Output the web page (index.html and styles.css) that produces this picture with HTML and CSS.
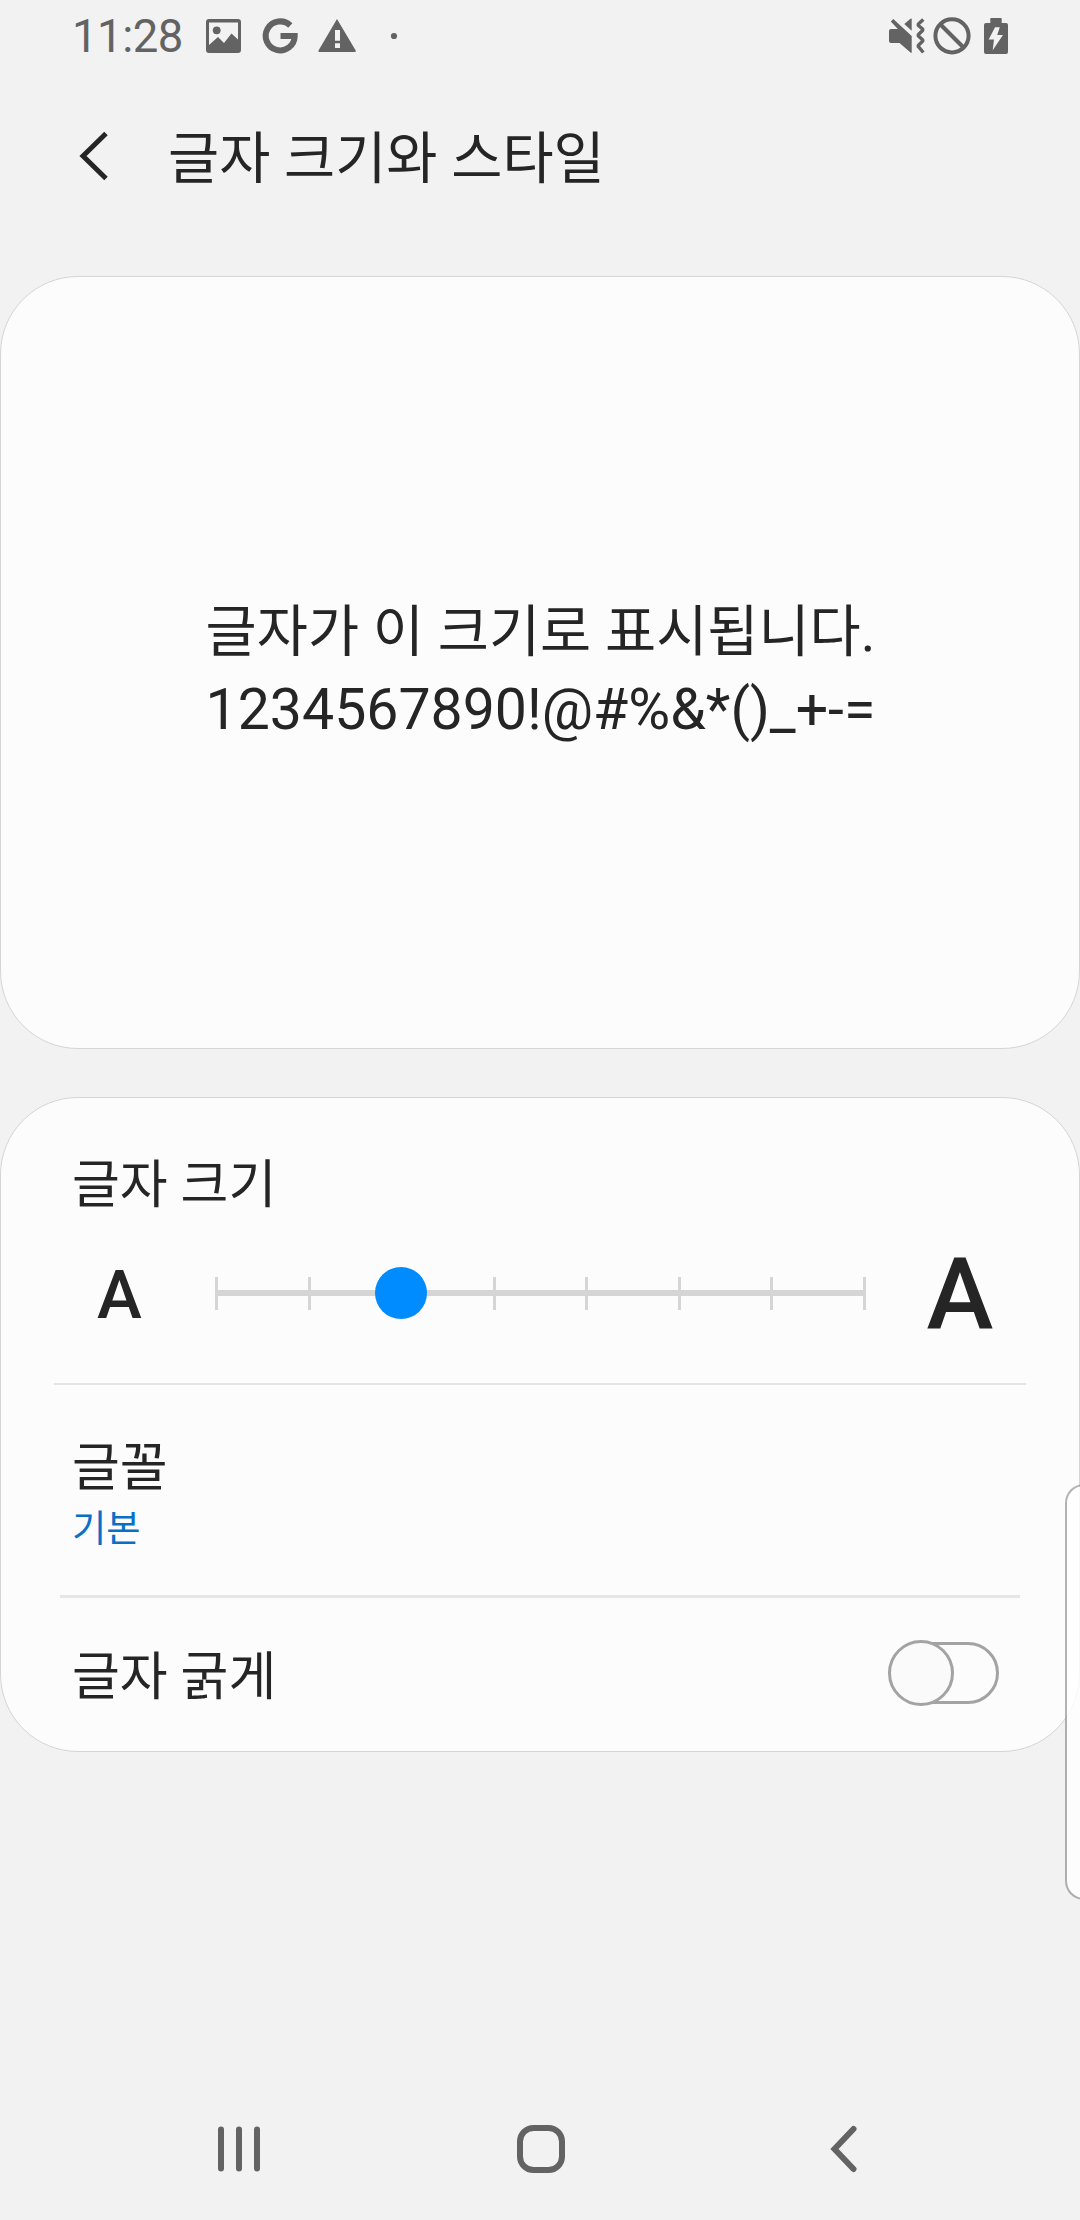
FILE: index.html
```html
<!DOCTYPE html>
<html lang="ko">
<head>
<meta charset="utf-8">
<title>글자 크기와 스타일</title>
<link rel="stylesheet" href="styles.css">
</head>
<body>
<div class="screen">
  <header class="status">
    <span class="clock">11:28</span>
    <svg class="notices" width="194" height="40" viewBox="204 16 194 40">
      <path fill-rule="evenodd" d="M209 19h29q3 0 3 3v28q0 3-3 3h-29q-3 0-3-3V22q0-3 3-3zM209 22.5V45l9-8 6 6 7.500-9.500 6.500 6V22.500z"/>
      <circle cx="216.700" cy="30.300" r="3.900"/>
      <path class="g-mark" d="M290.300 25.500A14.500 14.500 0 1 0 294.700 36H280.500"/>
      <path fill-rule="evenodd" d="M337 19l18.700 31.500q.6 1.500-1 1.500h-35.200q-1.600 0-1-1.500zM335 30v10.800h5V30zM335 43.300V48h5v-4.700z"/>
      <circle cx="394" cy="36" r="3.100"/>
    </svg>
    <svg class="system" width="124" height="40" viewBox="886 16 124 40">
      <path d="M893.300 19L911.700 36v16q0 1.500-1.200.6L899.500 43H891q-2 0-2-2V31q0-2 2-2h6.800l-7-7.500z"/>
      <path d="M904.300 24l6.200-5.300q1.200-.8 1.200.6v11.400z"/>
      <path class="line wave" d="M923.300 19.500l-4.600 4.300q-1 1 0 2l3.600 3q1 1 0 2l-3.600 3.500q-1 1 0 2l3.600 3.200q1 1 0 2l-3.600 3.500q-1 1 0 2l4.600 5.500"/>
      <circle class="line" cx="952" cy="35.800" r="16.600"/>
      <path class="line" d="M940.500 24.500l23 23"/>
      <path fill-rule="evenodd" d="M991 18h10q.7 0 .7.700V23h4.300q2 0 2 2v27q0 2-2 2h-20q-2 0-2-2V25q0-2 2-2h4.300v-4.300q0-.7.7-.7zM995 27.300L988.700 39.500H994l-1.300 10.700L1003 35h-5.800l2.600-7.700z"/>
    </svg>
  </header>

  <div class="titlebar">
    <svg width="32" height="50" viewBox="0 0 32 50"><path class="back" d="M28 2.500L5 25l23 22.500"/></svg>
    <h1>글자 크기와 스타일</h1>
  </div>

  <main>
    <section class="card preview">
      <p>글자가 이 크기로 표시됩니다.<br><span class="sample">1234567890!@#%&amp;*()_+-=</span></p>
    </section>

    <section class="card options">
      <div class="size">
        <h2>글자 크기</h2>
        <div class="size-row">
          <span class="letter small">A</span>
          <div class="slider">
            <i></i><i></i><i></i><i></i><i></i><i></i><i></i><i></i>
            <span class="thumb"></span>
          </div>
          <span class="letter large">A</span>
        </div>
      </div>
      <div class="font">
        <h2>글꼴</h2>
        <p>기본</p>
      </div>
      <div class="bold">
        <h2>글자 굵게</h2>
        <div class="switch"><span class="knob"></span></div>
      </div>
    </section>
  </main>

  <nav class="navbar">
    <svg width="44" height="48" viewBox="0 0 44 48"><path class="key" d="M4 4.500v39M22 4.500v39M40 4.500v39"/></svg>
    <svg width="48" height="48" viewBox="0 0 48 48"><rect class="key" x="3" y="3" width="42" height="42" rx="13.500"/></svg>
    <svg class="nav-back" width="28" height="48" viewBox="0 0 28 48"><path class="key" d="M23.500 4L4.500 24l19 20"/></svg>
  </nav>
  <div class="edge-handle"></div>
</div>
</body>
</html>
```
FILE: styles.css
```css
* { box-sizing: border-box; }
body { margin: 0; background: #f2f2f2; }
.screen {
  position: relative;
  width: 1080px;
  height: 2220px;
  overflow: hidden;
  display: flex;
  flex-direction: column;
  background: #f2f2f2;
  color: #252525;
  font-family: Roboto, "Noto Sans CJK KR", sans-serif;
}
h1, h2, p { margin: 0; font-weight: 400; }
svg { display: block; flex: none; }

.status {
  height: 72px;
  display: flex;
  align-items: center;
  padding: 0 70px 0 72px;
  color: #636363;
}
.clock { width: 132px; padding-top: 1px; font-size: 45.5px; line-height: 72px; letter-spacing: -0.5px; }
.status svg { fill: #636363; }
.system { margin-left: auto; }
.status .g-mark { fill: none; stroke: #636363; stroke-width: 6; }
.status .line { fill: none; stroke: #636363; stroke-width: 4; }
.status .wave { stroke-width: 3.4; }

.titlebar {
  height: 204px;
  display: flex;
  align-items: center;
  gap: 58px;
  padding: 0 78px 36px;
}
.back { fill: none; stroke: #252525; stroke-width: 5; }
.titlebar h1 { padding-top: 6px; font-size: 55.6px; line-height: 80px; }

.card {
  background: #fcfcfc;
  border: 1px solid #d5d5d5;
  border-radius: 78px;
}
.preview {
  height: 773px;
  padding: 17px 0 0 1px;
  display: flex;
  align-items: center;
  justify-content: center;
  font-size: 55.6px;
  line-height: 77px;
}
.sample { font-size: 57.2px; }
.options { height: 655px; margin-top: 48px; }
h2 { font-size: 52px; line-height: 76px; }
.size {
  height: 287px;
  margin: 0 53px;
  padding: 50px 18px 0;
  border-bottom: 2px solid #e5e5e5;
}
.size-row {
  height: 99px;
  margin-top: 20px;
  display: flex;
  align-items: center;
}
.letter { padding-top: 2px; font-weight: 500; line-height: 100px; text-align: center; }
.small { width: 95px; font-size: 67.5px; }
.large { width: 96px; margin-left: 46px; font-size: 100.8px; }
.slider {
  position: relative;
  width: 651px;
  height: 33px;
  margin-left: 48px;
  display: flex;
  flex: none;
  justify-content: space-between;
  background: linear-gradient(#d5d5d5, #d5d5d5) 0 13px / 100% 6px no-repeat;
}
.slider i { width: 3px; background: #d5d5d5; }
.thumb {
  position: absolute;
  left: 160px;
  top: -10px;
  width: 52px;
  height: 52px;
  border-radius: 50%;
  background: #008bff;
}
.font {
  height: 213px;
  margin: 0 59px;
  padding: 46px 12px 0;
  border-bottom: 3px solid #e5e5e5;
}
.font p { margin-top: -4px; font-size: 37.3px; line-height: 52px; color: #0a70c6; }
.bold {
  height: 152px;
  padding: 0 80px 2px 71px;
  display: flex;
  align-items: center;
  justify-content: space-between;
}
.bold h2 { padding-top: 9px; }
.switch {
  width: 109px;
  height: 62px;
  border: 3px solid #a3a3a3;
  border-radius: 31px;
}
.knob {
  display: block;
  width: 66px;
  height: 66px;
  margin: -5px 0 0 -5px;
  border: 3px solid #a3a3a3;
  border-radius: 50%;
  background: #fafafa;
}

.navbar {
  height: 142px;
  margin-top: auto;
  display: flex;
  align-items: center;
  justify-content: space-between;
  padding: 0 222px 0 217px;
}
.nav-back { margin-left: 9px; }
.key { fill: none; stroke: #636363; stroke-width: 6; stroke-linecap: round; }

.edge-handle {
  position: absolute;
  left: 1065px;
  top: 1484px;
  width: 40px;
  height: 416px;
  border: 2px solid rgba(130, 130, 130, .6);
  border-radius: 19px;
  background: rgba(255, 255, 255, .8);
  background-clip: padding-box;
}
```
